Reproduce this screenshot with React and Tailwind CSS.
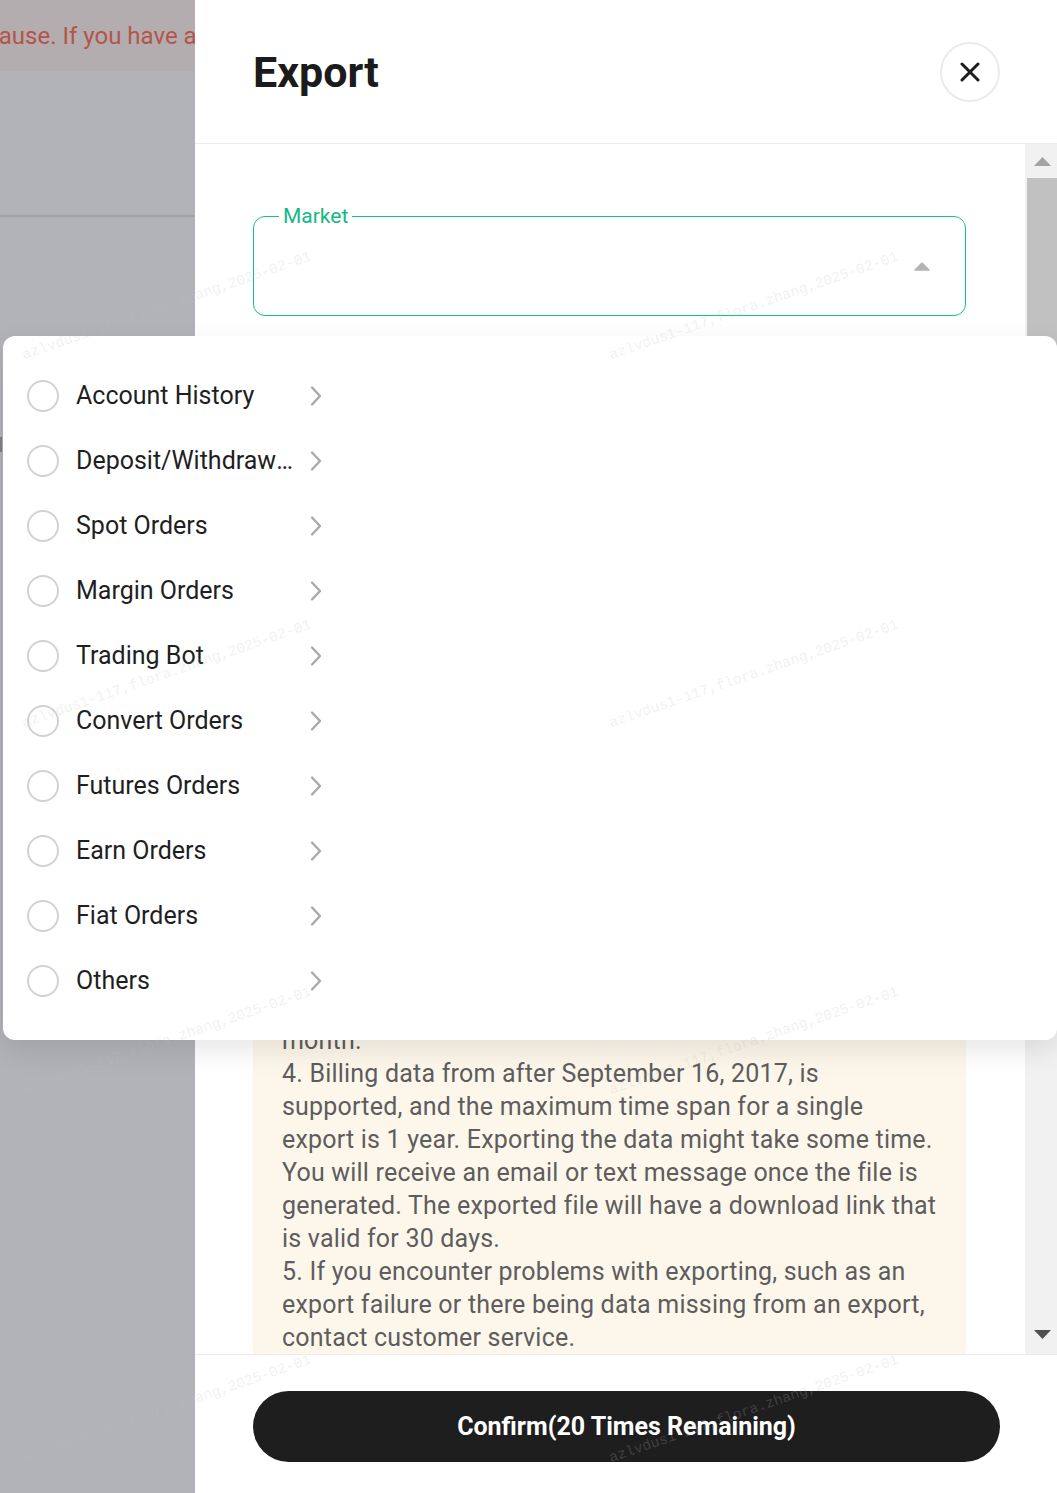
import React from "react";

const items = [
  "Account History",
  "Deposit/Withdrawal History",
  "Spot Orders",
  "Margin Orders",
  "Trading Bot",
  "Convert Orders",
  "Futures Orders",
  "Earn Orders",
  "Fiat Orders",
  "Others",
];

const hiddenLines = [
  "Notes:",
  "1. Account History, Deposit/Withdrawal History and",
  "order records can be exported from this page.",
  "2. Each account can export data up to 20 times per",
  "day. 3. Exports are limited to 10 per calendar",
  "period, and the count is reset at the start of each",
];

const visibleLines = [
  "month.",
  "4. Billing data from after September 16, 2017, is",
  "supported, and the maximum time span for a single",
  "export is 1 year. Exporting the data might take some time.",
  "You will receive an email or text message once the file is",
  "generated. The exported file will have a download link that",
  "is valid for 30 days.",
  "5. If you encounter problems with exporting, such as an",
  "export failure or there being data missing from an export,",
  "contact customer service.",
];

const marks = [
  "left-[25px] top-[348px]",
  "left-[25px] top-[716px]",
  "left-[25px] top-[1083px]",
  "left-[25px] top-[1451px]",
  "left-[612px] top-[348px]",
  "left-[612px] top-[716px]",
  "left-[612px] top-[1083px]",
  "left-[612px] top-[1451px]",
];

function Chevron() {
  return (
    <svg width="14" height="22" viewBox="0 0 14 22" fill="none">
      <path d="M3 2.5 L11 11 L3 19.5" stroke="#a9a9a9" strokeWidth="2.4" strokeLinecap="round" strokeLinejoin="round" />
    </svg>
  );
}

export default function App() {
  return (
    <div className="relative flex w-[1057px] h-[1493px] overflow-hidden font-[Roboto,sans-serif] bg-[#b1b3b8]">
      {/* left dimmed page */}
      <div className="w-[195px] shrink-0 flex flex-col overflow-hidden">
        <div className="h-[71px] bg-[#b3adb0] flex items-center overflow-hidden">
          <span className="whitespace-nowrap text-[24px] text-[#b4544b] ml-[-40px]">because. If you have any questions</span>
        </div>
        <div className="h-[144px] bg-[#b1b3b8]" />
        <div className="h-[2px] bg-[#a0a2a6]" />
        <div className="mt-[220px] w-[2px] h-[15px] bg-[#808286]" />
      </div>

      {/* drawer */}
      <div className="flex-1 flex flex-col bg-white">
        <div className="h-[144px] shrink-0 border-b border-[#ececec] flex items-center justify-between pl-[58px] pr-[57px]">
          <h1 className="text-[43px] leading-none font-bold text-[#1b1b1b] mt-[2px]">Export</h1>
          <button className="w-[60px] h-[60px] rounded-full border-2 border-[#ebebeb] flex items-center justify-center bg-white">
            <svg width="20" height="20" viewBox="0 0 20 20">
              <path d="M2 2 L18 18 M18 2 L2 18" stroke="#1b1b1b" strokeWidth="3" strokeLinecap="round" />
            </svg>
          </button>
        </div>

        <div className="h-[1210px] shrink-0 flex">
          <div className="flex-1 overflow-hidden pl-[58px] pr-[59px] flex flex-col">
            <div className="relative mt-[72px] h-[100px] shrink-0 rounded-[12px] border border-[#17bf8c] flex items-center justify-end pr-[35px]">
              <span className="absolute left-[25px] top-[-13px] px-[4px] bg-white text-[21px] leading-[24px] text-[#12b886]">Market</span>
              <svg width="16" height="9" viewBox="0 0 16 9">
                <path d="M8 1 L15 8 L1 8 Z" fill="#b4b4b4" stroke="#b4b4b4" strokeWidth="1.5" strokeLinejoin="round" />
              </svg>
            </div>
            <div className="mt-[490px] shrink-0 bg-[#fdf7eb] pt-[20px] pl-[29px] pr-[10px] pb-[24px] text-[25px] leading-[33px] text-[#5d5d5d]">
              {hiddenLines.map((l, i) => (
                <div key={"h" + i} className="h-[33px] whitespace-nowrap">{l}</div>
              ))}
              {visibleLines.map((l, i) => (
                <div key={"v" + i} className="h-[33px] whitespace-nowrap tracking-[0.2px]">{l}</div>
              ))}
            </div>
          </div>
          {/* scrollbar */}
          <div className="w-[32px] shrink-0 bg-[#f1f1f1] flex flex-col">
            <div className="h-[34px] flex items-center justify-center pl-[2px]">
              <svg width="17" height="9" viewBox="0 0 17 9"><path d="M8.5 0 L17 9 L0 9 Z" fill="#a3a3a3" /></svg>
            </div>
            <div className="ml-[2px] h-[620px] bg-[#c1c1c1]" />
            <div className="flex-1" />
            <div className="h-[38px] flex items-start justify-center pl-[2px] pt-[14px]">
              <svg width="17" height="9" viewBox="0 0 17 9"><path d="M0 0 L17 0 L8.5 9 Z" fill="#505050" /></svg>
            </div>
          </div>
        </div>

        <div className="flex-1 border-t border-[#ececec] pt-[36px] pl-[58px] pr-[57px]">
          <button className="w-full h-[71px] rounded-full bg-[#1e1e1e] text-white text-[25px] font-bold flex items-center justify-center">
            Confirm(20 Times Remaining)
          </button>
        </div>
      </div>

      {/* dropdown menu */}
      <div className="absolute left-[3px] top-[336px] w-[1054px] h-[704px] bg-white rounded-[12px] shadow-[0_10px_28px_rgba(0,0,0,0.10)] pt-[27px]">
        {items.map((it) => (
          <div key={it} className="h-[65px] flex items-center pl-[24px]">
            <div className="w-[32px] h-[32px] rounded-full border-2 border-[#d2d2d2] shrink-0" />
            <div className="ml-[17px] w-[220px] truncate text-[25px] text-[#1f1f1f]">{it}</div>
            <div className="ml-[13px] flex items-center"><Chevron /></div>
          </div>
        ))}
      </div>

      {/* watermarks */}
      {marks.map((m) => (
        <div
          key={m}
          className={"absolute pointer-events-none whitespace-nowrap font-['Liberation_Mono',monospace] text-[14.5px] leading-[14px] h-[14px] text-[rgba(190,190,190,0.22)] origin-bottom-left -rotate-[19deg] " + m}
        >
          azlvdus1-117,flora.zhang,2025-02-01
        </div>
      ))}
    </div>
  );
}
